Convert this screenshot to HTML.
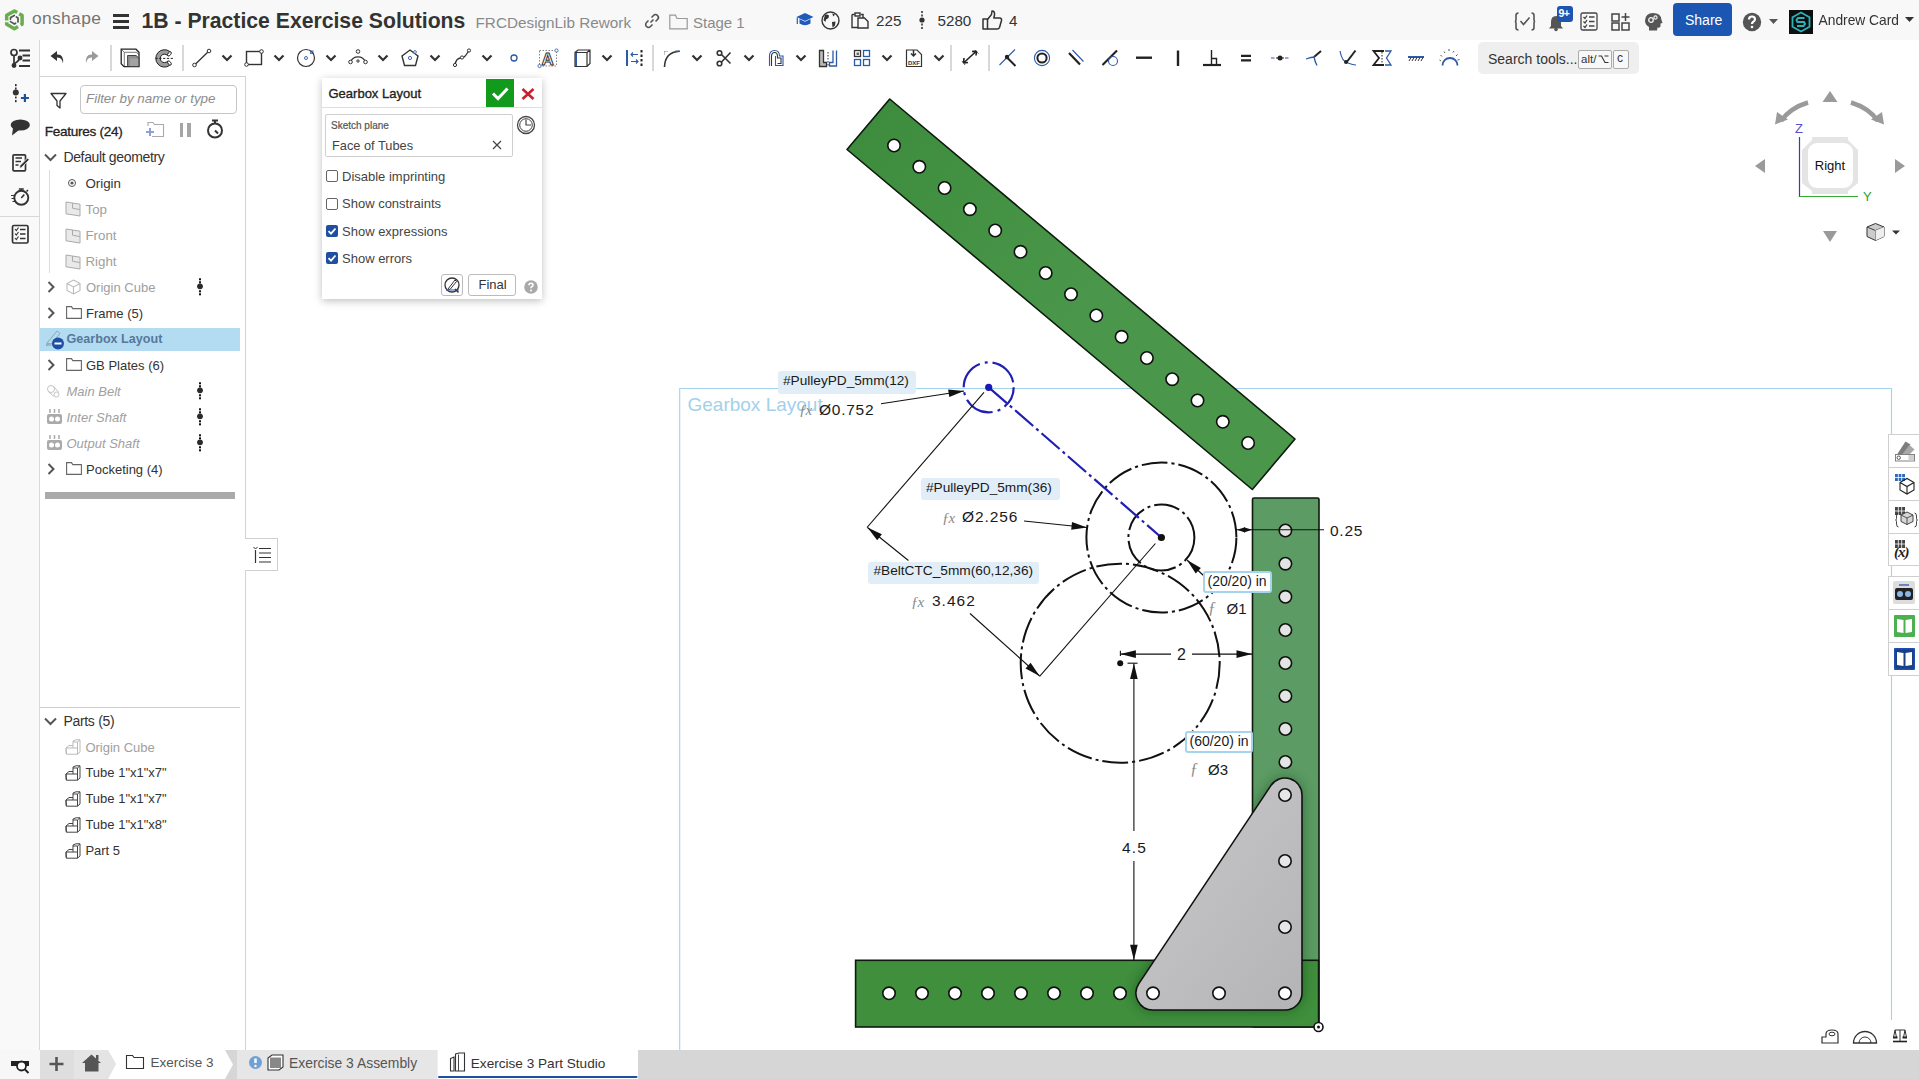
<!DOCTYPE html>
<html><head><meta charset="utf-8">
<style>
*{box-sizing:border-box;margin:0;padding:0}
html,body{width:1919px;height:1079px;overflow:hidden;background:#fff;font-family:"Liberation Sans",sans-serif;color:#333}
.a{position:absolute}
.t{position:absolute;white-space:nowrap;line-height:1}
svg{position:absolute;overflow:visible}
</style></head><body>

<div class="a" style="left:0;top:0;width:1919px;height:40px;background:#f8f8f8"></div>
<div class="a" style="left:0;top:40px;width:40px;height:1010px;background:#f9f9f9;border-right:1px solid #d8d8d8"></div>
<div class="a" style="left:40px;top:40px;width:1879px;height:37px;background:#fff"></div>
<div class="a" style="left:40px;top:76px;width:206px;height:974px;background:#fff;border-right:1px solid #d3d3d3;border-top:1px solid #d3d3d3"></div>
<div class="a" style="left:0;top:1050px;width:1919px;height:29px;background:#d6d6d6"></div>
<div class="a" style="left:0;top:1050px;width:40px;height:29px;background:#f7f7f7"></div>

<svg style="left:0;top:5px" width="30" height="30" viewBox="0 5 30 30">
<g fill="none" stroke="#66ae4e" stroke-width="3.5" stroke-linejoin="round">
<path d="M6.7 20.6 L6.7 15.35 L14.4 10.9 L17.2 12.5"/>
<path d="M19.2 13.9 L22.1 15.35 L22.1 24.25 L20.6 25.1"/>
<path d="M6.7 22.2 L6.7 24.25 L14.4 28.7 L18 26.6"/>
</g>
<g fill="none" stroke="#505550" stroke-width="1.7" stroke-linecap="round">
<path d="M10.5 19.3 L10.6 17.6 L14.3 15.4"/>
<path d="M16.4 17 L18 17.9 L18 22"/>
<path d="M10.5 21.6 L14.4 24 L15.6 23.2"/>
</g>
</svg>
<div class="t" style="left:32px;top:8px;font-size:17.4px;line-height:20px;color:#737373;letter-spacing:0.35px">onshape</div>
<div class="a" style="left:113px;top:14px;width:16px;height:3px;background:#333"></div><div class="a" style="left:113px;top:20px;width:16px;height:3px;background:#333"></div><div class="a" style="left:113px;top:26px;width:16px;height:3px;background:#333"></div>
<div class="t" style="left:141.5px;top:10.4px;font-size:21.2px;line-height:21.2px;color:#333;font-weight:bold">1B - Practice Exercise Solutions</div>
<div class="t" style="left:475.5px;top:15.3px;font-size:15.3px;line-height:15.3px;color:#8a8a8a;">FRCDesignLib Rework</div>
<svg style="left:644px;top:13px" width="16" height="16" viewBox="0 0 16 16" fill="none" stroke="#555" stroke-width="1.6">
<path d="M6.5 9.5 L9.5 6.5"/><path d="M7.5 4.5 L9.5 2.5 A2.5 2.5 0 0 1 13.5 6.5 L11.5 8.5"/><path d="M8.5 11.5 L6.5 13.5 A2.5 2.5 0 0 1 2.5 9.5 L4.5 7.5"/></svg>
<svg style="left:669px;top:14px" width="19" height="16" viewBox="0 0 19 16" fill="none" stroke="#999" stroke-width="1.2">
<path d="M0.8 2.5 L0.8 14.8 L18.2 14.8 L18.2 4.5 L8 4.5 L6.5 1.2 L0.8 1.2 Z"/></svg>
<div class="t" style="left:693px;top:14.5px;font-size:15px;line-height:15px;color:#8a8a8a;">Stage 1</div>
<svg style="left:796px;top:12px" width="18" height="16" viewBox="0 0 18 16">
<path d="M9 1 L17.5 5 L9 9 L0.5 5 Z" fill="#1f5cb8"/><path d="M3.5 7 L3.5 11.5 Q9 15 14.5 11.5 L14.5 7 L9 9.8 Z" fill="#1f5cb8"/><path d="M1.3 5.5 L1.3 12" stroke="#1f5cb8" stroke-width="1.2"/></svg>
<svg style="left:821px;top:11px" width="19" height="19" viewBox="0 0 19 19">
<circle cx="9.5" cy="9.5" r="8.5" fill="none" stroke="#333" stroke-width="1.4"/>
<path d="M4 4 Q6 3 8 4.5 L7.5 7 L5 8.5 L4.5 11 L2.5 9 Z" fill="#333"/><path d="M11 11 L14.5 10.5 L14 14.5 L11.5 16.5 Z" fill="#333"/><path d="M11 2.5 L14 3.5 L12.5 5.5 Z" fill="#333"/></svg>
<svg style="left:851px;top:12px" width="18" height="17" viewBox="0 0 18 17" fill="none" stroke="#333" stroke-width="1.4">
<path d="M1 2.5 L1 15.5 L7 15.5"/><path d="M3.5 2.5 L1 2.5"/><rect x="4" y="1" width="5" height="3" fill="#fff"/><path d="M7 6 L13.5 6 L17 9.5 L17 16 L7 16 Z"/><path d="M10 2.5 L12 2.5 L12 6"/></svg>
<div class="t" style="left:876px;top:12.9px;font-size:15.2px;line-height:15.2px;color:#333;">225</div>
<svg style="left:918px;top:11px" width="8" height="18" viewBox="0 0 8 18">
<rect x="3.2" y="0" width="1.6" height="2" fill="#333"/><rect x="3.2" y="3.5" width="1.6" height="2" fill="#333"/><circle cx="4" cy="9" r="2.6" fill="#333"/><rect x="3.2" y="12.5" width="1.6" height="2" fill="#333"/><rect x="3.2" y="16" width="1.6" height="2" fill="#333"/></svg>
<div class="t" style="left:937.5px;top:12.9px;font-size:15.2px;line-height:15.2px;color:#333;">5280</div>
<svg style="left:982px;top:10px" width="21" height="20" viewBox="0 0 21 20" fill="none" stroke="#333" stroke-width="1.5" stroke-linejoin="round">
<path d="M1 9 L5.5 9 L5.5 19 L1 19 Z"/><path d="M5.5 9.5 L9.5 4.5 L10 1 Q13 1 12.5 5 L11.8 8 L18 8 Q20 8.5 19.5 10.5 L17.5 17.5 Q17 19 15 19 L5.5 19"/></svg>
<div class="t" style="left:1009px;top:12.9px;font-size:15.2px;line-height:15.2px;color:#333;">4</div>
<svg style="left:1514px;top:12px" width="22" height="19" viewBox="0 0 22 19" fill="none" stroke="#555" stroke-width="1.6">
<path d="M4.5 1 Q2 1 2 3.5 L2 7.5 Q2 9.5 0.8 9.5 Q2 9.5 2 11.5 L2 15.5 Q2 18 4.5 18"/><path d="M17.5 1 Q20 1 20 3.5 L20 7.5 Q20 9.5 21.2 9.5 Q20 9.5 20 11.5 L20 15.5 Q20 18 17.5 18"/><path d="M6.5 9 L9.5 12.5 L15.5 5.5"/></svg>
<svg style="left:1548px;top:15px" width="16" height="16" viewBox="0 0 16 16">
<path d="M8 1 Q13 1 13 7 L13 11 L15 13.5 L1 13.5 L3 11 L3 7 Q3 1 8 1 Z" fill="#555"/><circle cx="8" cy="14.5" r="1.8" fill="#555"/></svg>
<div class="a" style="left:1557px;top:6px;width:16px;height:16px;background:#1d55b0;border-radius:3px"></div>
<div class="t" style="left:1558.5px;top:8.2px;font-size:10.5px;line-height:10.5px;color:#fff;font-weight:bold;letter-spacing:-0.5px">9+</div>
<svg style="left:1580px;top:12px" width="18" height="19" viewBox="0 0 18 19" fill="none" stroke="#444" stroke-width="1.3">
<rect x="1" y="1" width="16" height="17" rx="1.5"/><path d="M3.5 5 L5 6.5 L7 3.5 M3.5 9.5 L5 11 L7 8 M3.5 14 L5 15.5 L7 12.5"/><path d="M9 5 L14.5 5 M9 9.5 L14.5 9.5 M9 14 L14.5 14"/></svg>
<svg style="left:1611px;top:12px" width="20" height="19" viewBox="0 0 20 19" fill="none" stroke="#444" stroke-width="1.5">
<rect x="1" y="2" width="7" height="7"/><rect x="1" y="11" width="7" height="7"/><rect x="11" y="11" width="7" height="7"/><path d="M14.5 1 L14.5 9 M10.5 5 L18.5 5"/></svg>
<svg style="left:1644px;top:12px" width="19" height="19" viewBox="0 0 19 19">
<path d="M9 1 Q17 1 17.5 8 L18.5 11 L16.5 11.5 L16.5 14.5 Q16 16 13.5 15.5 L13 18.5 L5 18.5 L5 15 Q1 12.5 1 8.5 Q1.5 1 9 1 Z" fill="#555"/>
<circle cx="7" cy="8" r="2.3" fill="none" stroke="#f6f6f6" stroke-width="1.3"/><circle cx="11.5" cy="5.5" r="1.6" fill="none" stroke="#f6f6f6" stroke-width="1.1"/></svg>
<div class="a" style="left:1673px;top:3px;width:59px;height:33px;background:#1b56b3;border-radius:4px"></div>
<div class="t" style="left:1685px;top:12.5px;font-size:14px;line-height:14px;color:#fff;">Share</div>
<svg style="left:1742px;top:12px" width="20" height="20" viewBox="0 0 20 20">
<circle cx="10" cy="10" r="9.2" fill="#555"/><path d="M7 7.5 Q7 4.5 10 4.5 Q13 4.5 13 7.3 Q13 9 11 10 Q10 10.6 10 12" fill="none" stroke="#fff" stroke-width="2.2"/><circle cx="10" cy="15" r="1.3" fill="#fff"/></svg>
<svg style="left:1769px;top:19px" width="9" height="5" viewBox="0 0 9 5"><path d="M0 0 L9 0 L4.5 5 Z" fill="#555"/></svg>
<svg style="left:1789px;top:10px" width="24" height="24" viewBox="0 0 24 24">
<rect width="24" height="24" fill="#0b0f10"/><path d="M12 2.5 L20.5 7.3 L20.5 16.7 L12 21.5 L3.5 16.7 L3.5 7.3 Z" fill="none" stroke="#2bb3b8" stroke-width="1.8"/>
<path d="M15.5 8 L9 8 L7.5 10 L8.5 12 L15 12 L16 14 L14.5 16 L8 16" fill="none" stroke="#2bb3b8" stroke-width="2"/></svg>
<div class="t" style="left:1818.5px;top:14.1px;font-size:13.8px;line-height:13.8px;color:#333;transform:scaleY(1.1);transform-origin:0 50%">Andrew Card</div>
<svg style="left:1905px;top:17px" width="9" height="5" viewBox="0 0 9 5"><path d="M0 0 L9 0 L4.5 5 Z" fill="#333"/></svg>
<svg style="left:0;top:0" width="1919" height="80" viewBox="0 0 1919 80">
<g fill="none" stroke="#333" stroke-width="1.7"><circle cx="14" cy="52.5" r="3"/><path d="M14 55.5 L14 65"/><path d="M14 64 Q18 62 20 58"/><circle cx="14" cy="65.5" r="1.6" fill="#333"/><circle cx="20" cy="58" r="1.6" fill="#333"/><path d="M19 50.5 L30 50.5 M22.5 55.5 L30 55.5 M22.5 60.5 L30 60.5 M19 66 L30 66" stroke-width="2"/></g>
<path d="M57 51 L50.5 56 L57 61 L57 57.5 Q62 57 63 63.5 Q64 54 57 54.5 Z" fill="#333"/>
<path d="M92 51 L98.5 56 L92 61 L92 57.5 Q87 57 86 63.5 Q85 54 92 54.5 Z" fill="#9a9a9a"/>
<line x1="111" y1="45" x2="111" y2="71" stroke="#cfcfcf" stroke-width="1.6"/>
<path d="M121.2 49.2 L136 49.2 L139 52.2 L139 66.6 L124 66.6 L121.2 63.8 Z" fill="#fff" stroke="#222" stroke-width="1.3"/><path d="M124.3 66.2 L124.3 52.3 L136.8 52.3 L138.8 55" fill="none" stroke="#444" stroke-width="0.7"/><path d="M121.5 49.5 L124.3 52.3" stroke="#444" stroke-width="0.7"/><path d="M127.6 55.5 L136 55.5 L138.8 58 L138.8 66.5 L127.6 66.5 Z" fill="#8f8f8f" stroke="#333" stroke-width="0.9"/><rect x="130" y="58.5" width="8.3" height="7.6" fill="#a3a3a3"/>
<path d="M169.74 51.45 A8.7 8.7 0 1 0 169.74 65.35 L167.5 61.3 A4.2 4.2 0 1 1 167.5 55.5 Z" fill="#9c9c9c" stroke="#222" stroke-width="1"/><ellipse cx="169.4" cy="53.9" rx="1.4" ry="2.5" transform="rotate(38 169.4 53.9)" fill="#fff" stroke="#222" stroke-width="0.9"/><ellipse cx="169.4" cy="63" rx="1.4" ry="2.5" transform="rotate(-38 169.4 63)" fill="#fff" stroke="#222" stroke-width="0.9"/><path d="M155.5 58.4 L174 58.4" stroke="#222" stroke-width="1" stroke-dasharray="2.2 1.6"/>
<line x1="183" y1="45" x2="183" y2="71" stroke="#cfcfcf" stroke-width="1.6"/>
<path d="M194.5 65 L209 51" stroke="#333" stroke-width="1.3"/><circle cx="194.5" cy="65" r="1.8" fill="#fff" stroke="#333" stroke-width="1"/><circle cx="209" cy="51" r="1.8" fill="#fff" stroke="#333" stroke-width="1"/>
<path d="M222.5 55.5 L227 60 L231.5 55.5" fill="none" stroke="#333" stroke-width="2.2"/>
<rect x="246.5" y="51.5" width="15" height="13" fill="none" stroke="#333" stroke-width="1.4"/><circle cx="246.5" cy="64.5" r="1.8" fill="#fff" stroke="#333"/><circle cx="261.5" cy="51.5" r="1.8" fill="#fff" stroke="#333"/>
<path d="M274.5 55.5 L279 60 L283.5 55.5" fill="none" stroke="#333" stroke-width="2.2"/>
<circle cx="306" cy="58" r="8.5" fill="none" stroke="#333" stroke-width="1.2"/><circle cx="306" cy="58" r="1.5" fill="none" stroke="#2a5aa8" stroke-width="0.9"/><rect x="310.5" y="51" width="2.5" height="2.5" fill="none" stroke="#2a5aa8" stroke-width="0.8"/>
<path d="M326.5 55.5 L331 60 L335.5 55.5" fill="none" stroke="#333" stroke-width="2.2"/>
<path d="M350.5 62 A8 8 0 0 1 365.5 62" fill="none" stroke="#333" stroke-width="1.3"/><circle cx="350.5" cy="62" r="1.8" fill="#fff" stroke="#333"/><circle cx="365.5" cy="62" r="1.8" fill="#fff" stroke="#333"/><circle cx="358" cy="51.5" r="1.8" fill="#fff" stroke="#333"/><path d="M356 61 L360 61 M358 59 L358 63" stroke="#333" stroke-width="0.9"/>
<path d="M378.5 55.5 L383 60 L387.5 55.5" fill="none" stroke="#333" stroke-width="2.2"/>
<path d="M410 50 L418 56 L415.5 65.5 L404.5 65.5 L402 56 Z" fill="none" stroke="#333" stroke-width="1.4"/><circle cx="410" cy="58" r="1.6" fill="none" stroke="#2a5aa8" stroke-width="0.9"/><circle cx="415" cy="52" r="1.4" fill="#fff" stroke="#2a5aa8" stroke-width="0.8"/>
<path d="M430.5 55.5 L435 60 L439.5 55.5" fill="none" stroke="#333" stroke-width="2.2"/>
<path d="M455 65 Q456 58 461 58 Q464 58 466 55 L469 50.5" fill="none" stroke="#333" stroke-width="1.3"/><circle cx="455" cy="65" r="1.6" fill="#fff" stroke="#333"/><circle cx="462" cy="57.5" r="1.6" fill="#fff" stroke="#333"/><circle cx="469" cy="50.5" r="1.6" fill="#fff" stroke="#333"/>
<path d="M482.5 55.5 L487 60 L491.5 55.5" fill="none" stroke="#333" stroke-width="2.2"/>
<circle cx="514" cy="58" r="3" fill="none" stroke="#2a5aa8" stroke-width="1.3"/>
<rect x="539.5" y="50.5" width="17" height="15.5" fill="none" stroke="#666" stroke-width="0.8" stroke-dasharray="1.5 1.5"/><text x="541.5" y="64.5" font-family="Liberation Sans" font-weight="bold" font-size="17" fill="#fff" stroke="#333" stroke-width="1">A</text><circle cx="556.5" cy="50.5" r="1.6" fill="#fff" stroke="#2a5aa8" stroke-width="0.8"/><circle cx="539.5" cy="66" r="1.6" fill="#fff" stroke="#2a5aa8" stroke-width="0.8"/>
<path d="M575 52.5 L578 50 L590 50 L590 63.5 L587 66.5 L575 66.5 Z M575 52.5 L587 52.5 L587 66.5 M587 52.5 L590 50" fill="none" stroke="#333" stroke-width="1.2"/><path d="M576 53 L576 66" stroke="#2a5aa8" stroke-width="2"/>
<path d="M602.5 55.5 L607 60 L611.5 55.5" fill="none" stroke="#333" stroke-width="2.2"/>
<path d="M627 50 L627 66" stroke="#2a5aa8" stroke-width="2"/><path d="M641.5 50 L641.5 66" stroke="#222" stroke-width="2" stroke-dasharray="2.5 2"/><path d="M638 54.5 L631 54.5 M633 52.5 L631 54.5 L633 56.5 M631 61.5 L638 61.5 M636 59.5 L638 61.5 L636 63.5" fill="none" stroke="#2a5aa8" stroke-width="1.1"/>
<line x1="653" y1="45" x2="653" y2="71" stroke="#cfcfcf" stroke-width="1.6"/>
<path d="M664.5 67 Q665 52 679.5 51.3" fill="none" stroke="#333" stroke-width="1.6"/><path d="M675 51.3 L680 51.3" stroke="#2a5aa8" stroke-width="1.4"/><path d="M664.5 51.5 L668 51.5 M664.5 51.5 L664.5 55" stroke="#666" stroke-width="0.8" stroke-dasharray="1 1"/>
<path d="M692.5 55.5 L697 60 L701.5 55.5" fill="none" stroke="#333" stroke-width="2.2"/>
<g fill="none" stroke="#333" stroke-width="1.6"><circle cx="719.5" cy="53" r="2.3"/><circle cx="719.5" cy="63.5" r="2.3"/><path d="M721.5 54.5 L730.5 63.5 M721.5 62 L730.5 52.5"/></g>
<path d="M744.5 55.5 L749 60 L753.5 55.5" fill="none" stroke="#333" stroke-width="2.2"/>
<path d="M769.5 66 L769.5 56 Q769.5 50.5 774.5 50.5 Q779.5 50.5 779.5 56 L783 56 L783 65.5 L775.5 65.5 L775.5 56" fill="none" stroke="#2a5aa8" stroke-width="1.1"/><path d="M771.5 66 L771.5 56.5 Q771.5 52.5 774.5 52.5 Q777.5 52.5 777.5 56.5 L777.5 58 L781 58 L781 63.5 L777.5 63.5" fill="none" stroke="#333" stroke-width="1.1"/>
<path d="M796.5 55.5 L801 60 L805.5 55.5" fill="none" stroke="#333" stroke-width="2.2"/>
<path d="M819.5 50.5 L823.5 50.5 L823.5 62.5 L826.5 62.5 L826.5 66.5 L819.5 66.5 Z" fill="#bbb" stroke="#333" stroke-width="1.3"/><path d="M828 52 L828 66" stroke="#333" stroke-width="1" stroke-dasharray="1.5 1.5"/><path d="M836.5 50.5 L836.5 66 L829.5 66 L829.5 62.5 L833 62.5 L833 50.5" fill="none" stroke="#2a5aa8" stroke-width="1.3"/>
<rect x="854.5" y="50.5" width="6" height="6" fill="none" stroke="#333" stroke-width="1.3"/><rect x="856.5" y="52.5" width="2.5" height="2.5" fill="#666"/><rect x="863.5" y="50.5" width="6" height="6" fill="none" stroke="#2a5aa8" stroke-width="1.3"/><rect x="854.5" y="59.5" width="6" height="6" fill="none" stroke="#2a5aa8" stroke-width="1.3"/><rect x="863.5" y="59.5" width="6" height="6" fill="none" stroke="#2a5aa8" stroke-width="1.3"/>
<path d="M882.5 55.5 L887 60 L891.5 55.5" fill="none" stroke="#333" stroke-width="2.2"/>
<path d="M906.5 50 L917 50 L921.5 54.5 L921.5 66.5 L906.5 66.5 Z" fill="#fff" stroke="#333" stroke-width="1.2"/><path d="M913.5 50 L913.5 55.5 M911 53.5 L913.5 56 L916 53.5" fill="none" stroke="#333" stroke-width="1.5"/><text x="908" y="64.5" font-family="Liberation Sans" font-weight="bold" font-size="6" fill="#333">DXF</text>
<path d="M934.5 55.5 L939 60 L943.5 55.5" fill="none" stroke="#333" stroke-width="2.2"/>
<line x1="951" y1="45" x2="951" y2="71" stroke="#cfcfcf" stroke-width="1.6"/>
<path d="M963.5 63 L976.5 51 M963.5 63 L964 58 M963.5 63 L968 62.5 M976.5 51 L972 51.5 M976.5 51 L976 55.5" fill="none" stroke="#222" stroke-width="1.6"/><path d="M975 50.5 L978.5 53.5 M962 61 L965 65" stroke="#333" stroke-width="0.8"/>
<line x1="989" y1="45" x2="989" y2="71" stroke="#cfcfcf" stroke-width="1.6"/>
<path d="M999.5 65 L1015 49.5" stroke="#2a5aa8" stroke-width="1.1"/><path d="M1007 57.5 L1015.5 66" stroke="#222" stroke-width="2"/><circle cx="1007" cy="57" r="2.2" fill="#222"/>
<circle cx="1042" cy="58" r="7.6" fill="none" stroke="#2a5aa8" stroke-width="1.1"/><circle cx="1042" cy="58" r="4.6" fill="none" stroke="#222" stroke-width="2"/>
<path d="M1069 53 L1080 64.5" stroke="#222" stroke-width="2.2"/><path d="M1072.5 50 L1083.5 61.5" stroke="#2a5aa8" stroke-width="1.1"/>
<path d="M1102.5 65 L1117 50.5" stroke="#222" stroke-width="2.2"/><circle cx="1113" cy="61" r="4.5" fill="none" stroke="#2a5aa8" stroke-width="1.1"/>
<path d="M1136 57.7 L1152 57.7" stroke="#222" stroke-width="2.4"/>
<path d="M1178 50.5 L1178 66" stroke="#222" stroke-width="2.4"/>
<path d="M1203 65 L1221 65 M1211.5 50 L1211.5 65 M1211.5 58.5 L1216.5 58.5 L1216.5 65" fill="none" stroke="#222" stroke-width="1.4"/><path d="M1203 65 L1221 65" stroke="#222" stroke-width="2.2"/>
<path d="M1241 55.8 L1251 55.8 M1241 60.3 L1251 60.3" stroke="#222" stroke-width="2.2"/>
<path d="M1271 58 L1274.5 58 M1285 58 L1288.5 58" stroke="#2a5aa8" stroke-width="1.2"/><path d="M1276 58 L1284 58" stroke="#222" stroke-width="1"/><circle cx="1280" cy="58" r="2.5" fill="#222"/>
<path d="M1314 57 L1321 51" stroke="#222" stroke-width="2"/><path d="M1306 59 Q1312 57 1314 57 Q1315 62 1317 65.5" fill="none" stroke="#2a5aa8" stroke-width="1.3"/>
<path d="M1340 51 Q1342 62 1348 63 Q1353 65 1356 65" fill="none" stroke="#2a5aa8" stroke-width="1.2"/><path d="M1346 63 L1355.5 50.5" stroke="#222" stroke-width="2"/><circle cx="1346" cy="62" r="2" fill="#222"/>
<path d="M1384 51 L1373.5 51 L1379 58 L1373.5 65 L1384 65" fill="none" stroke="#222" stroke-width="1.8"/><path d="M1382 52 L1382 64" stroke="#222" stroke-width="1" stroke-dasharray="1.5 1.5"/><path d="M1385 51 L1391 51 L1386.5 58 L1391 65 L1385 65" fill="none" stroke="#2a5aa8" stroke-width="1.3"/>
<path d="M1408 57 L1424 57" stroke="#2a5aa8" stroke-width="2"/><path d="M1409 61 L1411 57.5 M1412 61 L1414 57.5 M1415 61 L1417 57.5 M1418 61 L1420 57.5 M1421 61 L1423 57.5" stroke="#333" stroke-width="1"/>
<path d="M1442.5 65.5 A7.5 7.5 0 0 1 1457.5 65.5" fill="none" stroke="#2a5aa8" stroke-width="1.8"/><g stroke="#444" stroke-width="0.9"><path d="M1441 61 L1439.5 60 M1442 56.5 L1440.5 55 M1445 53 L1444 51.5 M1449 51 L1449 49 M1453 52.5 L1454 51 M1456 56 L1457.5 54.5 M1457.5 60 L1459.5 59.5"/></g>
</svg>
<div class="a" style="left:1478px;top:42px;width:161px;height:32px;background:#efefef;border-radius:5px"></div>
<div class="t" style="left:1488px;top:50.5px;font-size:14px;line-height:16px;color:#333">Search tools...</div>
<div class="a" style="left:1578px;top:49.5px;width:34px;height:19px;background:#f8f8f8;border:1px solid #aaa;border-radius:2px"></div>
<div class="t" style="left:1581px;top:52.5px;font-size:11.5px;line-height:13px;color:#333">alt/</div>
<svg style="left:1597.5px;top:54px" width="11" height="10" viewBox="0 0 11 10"><path d="M0.5 2 L3.5 2 L7 8.5 L10.5 8.5 M6.5 2 L10.5 2" fill="none" stroke="#333" stroke-width="1.1"/></svg>
<div class="a" style="left:1612.5px;top:49.5px;width:16px;height:19px;background:#f8f8f8;border:1px solid #aaa;border-radius:2px"></div>
<div class="t" style="left:1617px;top:52px;font-size:12px;line-height:13px;color:#333">c</div>
<svg style="left:0;top:80px" width="40" height="170" viewBox="0 80 40 170">
<g fill="#333"><rect x="15" y="84" width="1.6" height="2.2"/><rect x="15" y="87.5" width="1.6" height="2"/><circle cx="15.8" cy="92.6" r="3"/><rect x="15" y="96.5" width="1.6" height="2"/><rect x="15" y="100" width="1.6" height="2.2"/></g>
<path d="M24.9 94 L24.9 102 M20.9 98 L28.9 98" stroke="#1d4f9e" stroke-width="2.2"/>
<ellipse cx="20.3" cy="125" rx="9.6" ry="5.6" fill="#333"/><path d="M13 128 L12 135.5 L19 130 Z" fill="#333"/>
<rect x="13" y="154.8" width="12.5" height="16" rx="1" fill="none" stroke="#333" stroke-width="1.7"/><path d="M15.5 158 L22 158 M15.5 161.5 L21 161.5 M15.5 165 L18.5 165" stroke="#333" stroke-width="1.4"/><path d="M19.5 168.5 L20 165.5 L27.5 158 L29.3 159.8 L21.8 167.3 Z" fill="#333" stroke="#f9f9f9" stroke-width="0.8"/>
<circle cx="21.3" cy="197.8" r="7" fill="none" stroke="#333" stroke-width="1.9"/><path d="M18.8 189 L23.8 189 M21.3 189 L21.3 191 M21.3 198 L24.3 194.5 M26.5 191.5 L28 190" stroke="#333" stroke-width="1.6"/><path d="M11 195.5 L15 195.5 M11.5 198.5 L14.5 198.5 M12.5 201.5 L15 201.5" stroke="#333" stroke-width="1.2"/>
<rect x="12.5" y="225.5" width="15.5" height="17.5" rx="1.5" fill="none" stroke="#333" stroke-width="1.7"/><path d="M15 229 L16.3 230.5 L18.5 227.5 M15 233.5 L16.3 235 L18.5 232 M15 238 L16.3 239.5 L18.5 236.5" fill="none" stroke="#333" stroke-width="1.1"/><path d="M20 229.5 L25.5 229.5 M20 234 L25.5 234 M20 238.5 L25.5 238.5" stroke="#333" stroke-width="1.4"/>
</svg>
<div class="a" style="left:0;top:215.5px;width:40px;height:1px;background:#d8d8d8"></div>
<svg style="left:50px;top:92px" width="17" height="17" viewBox="0 0 17 17"><path d="M1 1.5 L16 1.5 L10 9 L10 16 L7 13.5 L7 9 Z" fill="none" stroke="#333" stroke-width="1.3" stroke-linejoin="round"/></svg>
<div class="a" style="left:79.5px;top:84.5px;width:157px;height:29px;border:1px solid #c6c6c6;border-radius:4px;background:#fff"></div>
<div class="t" style="left:86px;top:92.3px;font-size:13.4px;line-height:14.7px;color:#8c8c8c;font-style:italic">Filter by name or type</div>
<div class="t" style="left:44.7px;top:123.6px;font-size:13.6px;line-height:15.0px;color:#222;-webkit-text-stroke:0.3px #222;letter-spacing:-0.3px">Features (24)</div>
<svg style="left:145px;top:121px" width="20" height="17" viewBox="0 0 20 17"><path d="M3 5 L3 1.5 L8 1.5 L9.5 3.5 L18.5 3.5 L18.5 15.5 L7 15.5" fill="none" stroke="#aaa" stroke-width="1.1"/><path d="M1 11 L9 11 M5 7 L5 15" stroke="#8fa0d8" stroke-width="2"/></svg>
<div class="a" style="left:179.5px;top:123px;width:3.5px;height:14px;background:#a5a5a5"></div><div class="a" style="left:187px;top:123px;width:3.5px;height:14px;background:#a5a5a5"></div>
<svg style="left:206px;top:119px" width="18" height="20" viewBox="0 0 18 20"><circle cx="9" cy="11.5" r="7" fill="none" stroke="#333" stroke-width="2"/><path d="M6 1.5 L12 1.5 M9 1.5 L9 4 M9 11.5 L12 14.5" stroke="#333" stroke-width="2"/></svg>
<svg style="left:44px;top:152.5px" width="13" height="9" viewBox="0 0 13 9"><path d="M1 1.5 L6.5 7 L12 1.5" fill="none" stroke="#555" stroke-width="2"/></svg>
<div class="t" style="left:63.4px;top:149.8px;font-size:14px;line-height:15.4px;color:#333;letter-spacing:-0.35px">Default geometry</div>
<div class="a" style="left:49px;top:170px;width:1px;height:103px;background:#ddd"></div>
<svg style="left:67px;top:178px" width="10" height="10" viewBox="0 0 10 10"><circle cx="5" cy="5" r="3.5" fill="none" stroke="#555" stroke-width="1"/><circle cx="5" cy="5" r="1.6" fill="#555"/></svg>
<div class="t" style="left:85.5px;top:176.5px;font-size:13.3px;line-height:14.6px;color:#333;">Origin</div>
<svg style="left:65px;top:201.3px" width="16" height="16" viewBox="0 0 16 16"><path d="M1 1 L15 3.2 L15 15 L1 12.8 Z" fill="#e9e9e9" stroke="#aaa" stroke-width="1"/><path d="M7.5 2 L7.5 7.2 L15 8.6" fill="none" stroke="#aaa" stroke-width="1"/></svg>
<div class="t" style="left:85.5px;top:202.5px;font-size:13.3px;line-height:14.6px;color:#a0a0a0;">Top</div>
<svg style="left:65px;top:227.5px" width="16" height="16" viewBox="0 0 16 16"><path d="M1 1 L15 3.2 L15 15 L1 12.8 Z" fill="#e9e9e9" stroke="#aaa" stroke-width="1"/><path d="M7.5 2 L7.5 7.2 L15 8.6" fill="none" stroke="#aaa" stroke-width="1"/></svg>
<div class="t" style="left:85.5px;top:228.7px;font-size:13.3px;line-height:14.6px;color:#a0a0a0;">Front</div>
<svg style="left:65px;top:253.60000000000002px" width="16" height="16" viewBox="0 0 16 16"><path d="M1 1 L15 3.2 L15 15 L1 12.8 Z" fill="#e9e9e9" stroke="#aaa" stroke-width="1"/><path d="M7.5 2 L7.5 7.2 L15 8.6" fill="none" stroke="#aaa" stroke-width="1"/></svg>
<div class="t" style="left:85.5px;top:254.8px;font-size:13.3px;line-height:14.6px;color:#a0a0a0;">Right</div>
<svg style="left:46.5px;top:281.3px" width="9" height="12" viewBox="0 0 9 12"><path d="M1.5 1 L6.5 6 L1.5 11" fill="none" stroke="#555" stroke-width="2"/></svg>
<svg style="left:66px;top:279px" width="15" height="16" viewBox="0 0 15 16" fill="none" stroke="#bbb" stroke-width="1.1"><path d="M7.5 1 L14 4.5 L14 11.5 L7.5 15 L1 11.5 L1 4.5 Z M1 4.5 L7.5 8 L14 4.5 M7.5 8 L7.5 15"/></svg>
<div class="t" style="left:86px;top:280.7px;font-size:13px;line-height:14.3px;color:#a0a0a0;">Origin Cube</div>
<svg style="left:197px;top:277.5px" width="6" height="18" viewBox="0 0 6 18"><rect x="2" y="0.3" width="2" height="2" fill="#111"/><rect x="2" y="3.3" width="2" height="2" fill="#111"/><circle cx="3" cy="8.3" r="2.9" fill="#2a2a2a"/><rect x="2" y="12.3" width="2" height="2" fill="#111"/><rect x="2" y="15.3" width="2" height="2" fill="#111"/></svg>
<svg style="left:46.5px;top:307.4px" width="9" height="12" viewBox="0 0 9 12"><path d="M1.5 1 L6.5 6 L1.5 11" fill="none" stroke="#555" stroke-width="2"/></svg>
<svg style="left:66px;top:306.4px" width="16" height="13" viewBox="0 0 16 13"><path d="M0.6 0.6 L5.5 0.6 L6.8 2.6 L15.4 2.6 L15.4 12.4 L0.6 12.4 Z" fill="none" stroke="#666" stroke-width="1.1"/></svg>
<div class="t" style="left:86px;top:306.8px;font-size:13px;line-height:14.3px;color:#333;">Frame (5)</div>
<div class="a" style="left:40px;top:327.5px;width:200px;height:23px;background:#b3dcf3"></div>
<svg style="left:45px;top:328px" width="22" height="22" viewBox="0 0 22 22"><path d="M2 15 L12 3 L15 5.5 L6 16 Z M2 15 L1.5 17.5 L4 16.5" fill="none" stroke="#8aa" stroke-width="1"/><path d="M1 17 L9 17" stroke="#8aa" stroke-width="1"/><circle cx="13" cy="15.5" r="6" fill="#1f4fa5"/><path d="M9.5 15.5 L16.5 15.5" stroke="#fff" stroke-width="2"/></svg>
<div class="t" style="left:66.5px;top:332.9px;font-size:12.6px;line-height:13.9px;color:#56789a;font-weight:bold">Gearbox Layout</div>
<svg style="left:46.5px;top:359.3px" width="9" height="12" viewBox="0 0 9 12"><path d="M1.5 1 L6.5 6 L1.5 11" fill="none" stroke="#555" stroke-width="2"/></svg>
<svg style="left:66px;top:358.3px" width="16" height="13" viewBox="0 0 16 13"><path d="M0.6 0.6 L5.5 0.6 L6.8 2.6 L15.4 2.6 L15.4 12.4 L0.6 12.4 Z" fill="none" stroke="#666" stroke-width="1.1"/></svg>
<div class="t" style="left:86px;top:358.7px;font-size:13px;line-height:14.3px;color:#333;">GB Plates (6)</div>
<svg style="left:46px;top:384px" width="15" height="15" viewBox="0 0 15 15" fill="none" stroke="#c4c4c4" stroke-width="1"><circle cx="5" cy="5" r="3.5"/><circle cx="10.5" cy="10.5" r="2.5"/><path d="M2.3 7.5 L8.3 12.7 M7.5 2.3 L12.7 8.3"/></svg>
<div class="t" style="left:66.5px;top:384.7px;font-size:13px;line-height:14.3px;color:#a0a0a0;font-style:italic">Main Belt</div>
<svg style="left:197px;top:381.5px" width="6" height="18" viewBox="0 0 6 18"><rect x="2" y="0.3" width="2" height="2" fill="#111"/><rect x="2" y="3.3" width="2" height="2" fill="#111"/><circle cx="3" cy="8.3" r="2.9" fill="#2a2a2a"/><rect x="2" y="12.3" width="2" height="2" fill="#111"/><rect x="2" y="15.3" width="2" height="2" fill="#111"/></svg>
<svg style="left:46px;top:408.3px" width="17" height="17" viewBox="0 0 17 17"><rect x="1" y="6" width="15" height="10" rx="2" fill="#aaa"/><circle cx="5.5" cy="11" r="2.5" fill="#fff"/><circle cx="11.5" cy="11" r="2.5" fill="#fff"/><path d="M4 1 L4 5 M8.5 1 L8.5 5 M13 1 L13 5" stroke="#aaa" stroke-width="1.5"/></svg>
<div class="t" style="left:66.5px;top:410.7px;font-size:13px;line-height:14.3px;color:#a0a0a0;font-style:italic">Inter Shaft</div>
<svg style="left:197px;top:407.8px" width="6" height="18" viewBox="0 0 6 18"><rect x="2" y="0.3" width="2" height="2" fill="#111"/><rect x="2" y="3.3" width="2" height="2" fill="#111"/><circle cx="3" cy="8.3" r="2.9" fill="#2a2a2a"/><rect x="2" y="12.3" width="2" height="2" fill="#111"/><rect x="2" y="15.3" width="2" height="2" fill="#111"/></svg>
<svg style="left:46px;top:434.4px" width="17" height="17" viewBox="0 0 17 17"><rect x="1" y="6" width="15" height="10" rx="2" fill="#aaa"/><circle cx="5.5" cy="11" r="2.5" fill="#fff"/><circle cx="11.5" cy="11" r="2.5" fill="#fff"/><path d="M4 1 L4 5 M8.5 1 L8.5 5 M13 1 L13 5" stroke="#aaa" stroke-width="1.5"/></svg>
<div class="t" style="left:66.5px;top:436.8px;font-size:13px;line-height:14.3px;color:#a0a0a0;font-style:italic">Output Shaft</div>
<svg style="left:197px;top:433.9px" width="6" height="18" viewBox="0 0 6 18"><rect x="2" y="0.3" width="2" height="2" fill="#111"/><rect x="2" y="3.3" width="2" height="2" fill="#111"/><circle cx="3" cy="8.3" r="2.9" fill="#2a2a2a"/><rect x="2" y="12.3" width="2" height="2" fill="#111"/><rect x="2" y="15.3" width="2" height="2" fill="#111"/></svg>
<svg style="left:46.5px;top:463.4px" width="9" height="12" viewBox="0 0 9 12"><path d="M1.5 1 L6.5 6 L1.5 11" fill="none" stroke="#555" stroke-width="2"/></svg>
<svg style="left:66px;top:462.4px" width="16" height="13" viewBox="0 0 16 13"><path d="M0.6 0.6 L5.5 0.6 L6.8 2.6 L15.4 2.6 L15.4 12.4 L0.6 12.4 Z" fill="none" stroke="#666" stroke-width="1.1"/></svg>
<div class="t" style="left:86px;top:462.8px;font-size:13px;line-height:14.3px;color:#333;">Pocketing (4)</div>
<div class="a" style="left:45px;top:492px;width:190px;height:7px;background:#aaaaaa"></div>
<div class="a" style="left:245px;top:538px;width:33px;height:33px;background:#fff;border:1px solid #cfcfcf;border-left:none"></div>
<svg style="left:252px;top:546px" width="20" height="18" viewBox="0 0 20 18"><path d="M1.5 1 L3.5 3 L5.5 1" fill="none" stroke="#333" stroke-width="1"/><path d="M3.5 4 L3.5 17" stroke="#333" stroke-width="1.2"/><path d="M7 2.5 L19 2.5 M7 7 L19 7 M7 11.5 L19 11.5 M7 16 L19 16" stroke="#333" stroke-width="1.2"/></svg>
<div class="a" style="left:40px;top:707px;width:200px;height:1px;background:#cfcfcf"></div>
<svg style="left:44px;top:716.5px" width="13" height="9" viewBox="0 0 13 9"><path d="M1 1.5 L6.5 7 L12 1.5" fill="none" stroke="#555" stroke-width="2"/></svg>
<div class="t" style="left:63.4px;top:714.3px;font-size:14px;line-height:15.4px;color:#333;letter-spacing:-0.3px">Parts (5)</div>
<svg style="left:64.5px;top:739.2px" width="17" height="16" viewBox="0 0 17 16" fill="none" stroke="#bbb" stroke-width="1"><path d="M1 9 L4 6.5 L8 6.5 L8 2 L11 0.8 L15 0.8 L15 13 L12.5 15.2 L1.5 15.2 L1 14 Z"/><path d="M1 9 L1.5 15.2 M4 9 L1 9 M4 9 L12.5 9 L12.5 15.2 M12.5 9 L12.5 3 L15 0.8 M8 3 L12.5 3 M8 6.5 L8 9"/></svg>
<div class="t" style="left:85.4px;top:740.6px;font-size:13px;line-height:14.3px;color:#a0a0a0;">Origin Cube</div>
<svg style="left:64.5px;top:764.7px" width="17" height="16" viewBox="0 0 17 16" fill="none" stroke="#444" stroke-width="1"><path d="M1 9 L4 6.5 L8 6.5 L8 2 L11 0.8 L15 0.8 L15 13 L12.5 15.2 L1.5 15.2 L1 14 Z"/><path d="M1 9 L1.5 15.2 M4 9 L1 9 M4 9 L12.5 9 L12.5 15.2 M12.5 9 L12.5 3 L15 0.8 M8 3 L12.5 3 M8 6.5 L8 9"/></svg>
<div class="t" style="left:85.4px;top:766.1px;font-size:13px;line-height:14.3px;color:#333;">Tube 1"x1"x7"</div>
<svg style="left:64.5px;top:790.8px" width="17" height="16" viewBox="0 0 17 16" fill="none" stroke="#444" stroke-width="1"><path d="M1 9 L4 6.5 L8 6.5 L8 2 L11 0.8 L15 0.8 L15 13 L12.5 15.2 L1.5 15.2 L1 14 Z"/><path d="M1 9 L1.5 15.2 M4 9 L1 9 M4 9 L12.5 9 L12.5 15.2 M12.5 9 L12.5 3 L15 0.8 M8 3 L12.5 3 M8 6.5 L8 9"/></svg>
<div class="t" style="left:85.4px;top:792.1px;font-size:13px;line-height:14.3px;color:#333;">Tube 1"x1"x7"</div>
<svg style="left:64.5px;top:816.7px" width="17" height="16" viewBox="0 0 17 16" fill="none" stroke="#444" stroke-width="1"><path d="M1 9 L4 6.5 L8 6.5 L8 2 L11 0.8 L15 0.8 L15 13 L12.5 15.2 L1.5 15.2 L1 14 Z"/><path d="M1 9 L1.5 15.2 M4 9 L1 9 M4 9 L12.5 9 L12.5 15.2 M12.5 9 L12.5 3 L15 0.8 M8 3 L12.5 3 M8 6.5 L8 9"/></svg>
<div class="t" style="left:85.4px;top:818.1px;font-size:13px;line-height:14.3px;color:#333;">Tube 1"x1"x8"</div>
<svg style="left:64.5px;top:843px" width="17" height="16" viewBox="0 0 17 16" fill="none" stroke="#444" stroke-width="1"><path d="M1 9 L4 6.5 L8 6.5 L8 2 L11 0.8 L15 0.8 L15 13 L12.5 15.2 L1.5 15.2 L1 14 Z"/><path d="M1 9 L1.5 15.2 M4 9 L1 9 M4 9 L12.5 9 L12.5 15.2 M12.5 9 L12.5 3 L15 0.8 M8 3 L12.5 3 M8 6.5 L8 9"/></svg>
<div class="t" style="left:85.4px;top:844.4px;font-size:13px;line-height:14.3px;color:#333;">Part 5</div>
<svg width="1919" height="1079" style="left:0;top:0" viewBox="0 0 1919 1079">
<defs><linearGradient id="gg" x1="0" y1="0" x2="1" y2="1"><stop offset="0" stop-color="#c9c9cb"/><stop offset="1" stop-color="#b4b4b6"/></linearGradient><linearGradient id="dg" gradientUnits="userSpaceOnUse" x1="868" y1="124" x2="1274" y2="464"><stop offset="0" stop-color="#3e8c3d"/><stop offset="0.55" stop-color="#4a974b"/><stop offset="1" stop-color="#4a974c"/></linearGradient><filter id="blur" x="-20%" y="-20%" width="140%" height="140%"><feGaussianBlur stdDeviation="7"/></filter><clipPath id="tubes"><rect x="1252.5" y="498" width="66.5" height="529"/><rect x="855.6" y="960.3" width="463" height="66.7"/></clipPath></defs>
<path d="M679.7 1050 L679.7 388.5 L1891.5 388.5 L1891.5 1020" fill="none" stroke="#a3d3ec" stroke-width="1.1"/>
<text x="687.5" y="411" font-family="Liberation Sans" font-size="19" fill="#a3d0ea">Gearbox Layout</text>
<polygon points="889.7,99 1295,439 1252.3,489.5 847,149.5" fill="url(#dg)" stroke="#0d1a0d" stroke-width="1.6" stroke-linejoin="round"/>
<circle cx="894.0" cy="145.5" r="6.2" fill="#fff" stroke="#111" stroke-width="1.6"/>
<circle cx="919.3" cy="166.8" r="6.2" fill="#fff" stroke="#111" stroke-width="1.6"/>
<circle cx="944.6" cy="188.0" r="6.2" fill="#fff" stroke="#111" stroke-width="1.6"/>
<circle cx="969.9" cy="209.2" r="6.2" fill="#fff" stroke="#111" stroke-width="1.6"/>
<circle cx="995.2" cy="230.5" r="6.2" fill="#fff" stroke="#111" stroke-width="1.6"/>
<circle cx="1020.5" cy="251.8" r="6.2" fill="#fff" stroke="#111" stroke-width="1.6"/>
<circle cx="1045.7" cy="273.0" r="6.2" fill="#fff" stroke="#111" stroke-width="1.6"/>
<circle cx="1071.0" cy="294.2" r="6.2" fill="#fff" stroke="#111" stroke-width="1.6"/>
<circle cx="1096.3" cy="315.5" r="6.2" fill="#fff" stroke="#111" stroke-width="1.6"/>
<circle cx="1121.6" cy="336.8" r="6.2" fill="#fff" stroke="#111" stroke-width="1.6"/>
<circle cx="1146.9" cy="358.0" r="6.2" fill="#fff" stroke="#111" stroke-width="1.6"/>
<circle cx="1172.2" cy="379.2" r="6.2" fill="#fff" stroke="#111" stroke-width="1.6"/>
<circle cx="1197.5" cy="400.5" r="6.2" fill="#fff" stroke="#111" stroke-width="1.6"/>
<circle cx="1222.8" cy="421.8" r="6.2" fill="#fff" stroke="#111" stroke-width="1.6"/>
<circle cx="1248.1" cy="443.0" r="6.2" fill="#fff" stroke="#111" stroke-width="1.6"/>
<rect x="1252.5" y="498" width="66.5" height="529" rx="1.5" fill="#5c9c64" stroke="#0d1a0d" stroke-width="1.6"/>
<circle cx="1285.4" cy="530.5" r="6.2" fill="#e3e5e3" stroke="#111" stroke-width="1.6"/>
<circle cx="1285.4" cy="563.7" r="6.2" fill="#e3e5e3" stroke="#111" stroke-width="1.6"/>
<circle cx="1285.4" cy="596.8" r="6.2" fill="#e3e5e3" stroke="#111" stroke-width="1.6"/>
<circle cx="1285.4" cy="630" r="6.2" fill="#e3e5e3" stroke="#111" stroke-width="1.6"/>
<circle cx="1285.4" cy="663" r="6.2" fill="#e3e5e3" stroke="#111" stroke-width="1.6"/>
<circle cx="1285.4" cy="696" r="6.2" fill="#e3e5e3" stroke="#111" stroke-width="1.6"/>
<circle cx="1285.4" cy="729" r="6.2" fill="#e3e5e3" stroke="#111" stroke-width="1.6"/>
<circle cx="1285.4" cy="762" r="6.2" fill="#e3e5e3" stroke="#111" stroke-width="1.6"/>
<rect x="855.6" y="960.3" width="463" height="66.7" fill="#3f8f3d" stroke="#0d1a0d" stroke-width="1.6"/>
<circle cx="889" cy="993.3" r="6.2" fill="#fff" stroke="#111" stroke-width="1.6"/>
<circle cx="922" cy="993.3" r="6.2" fill="#fff" stroke="#111" stroke-width="1.6"/>
<circle cx="955" cy="993.3" r="6.2" fill="#fff" stroke="#111" stroke-width="1.6"/>
<circle cx="988" cy="993.3" r="6.2" fill="#fff" stroke="#111" stroke-width="1.6"/>
<circle cx="1021" cy="993.3" r="6.2" fill="#fff" stroke="#111" stroke-width="1.6"/>
<circle cx="1054" cy="993.3" r="6.2" fill="#fff" stroke="#111" stroke-width="1.6"/>
<circle cx="1087" cy="993.3" r="6.2" fill="#fff" stroke="#111" stroke-width="1.6"/>
<circle cx="1120" cy="993.3" r="6.2" fill="#fff" stroke="#111" stroke-width="1.6"/>
<g clip-path="url(#tubes)"><path d="M1302 795 L1302 993 A17 17 0 0 1 1285 1010 L1153 1010 A17 17 0 0 1 1138.85 983.57 L1270.85 785.57 A17 17 0 0 1 1302 795 Z" fill="#0a2a0a" opacity="0.45" filter="url(#blur)"/></g>
<path d="M1302 795 L1302 993 A17 17 0 0 1 1285 1010 L1153 1010 A17 17 0 0 1 1138.85 983.57 L1270.85 785.57 A17 17 0 0 1 1302 795 Z" fill="url(#gg)" stroke="#111" stroke-width="1.6"/>
<circle cx="1285" cy="795" r="6.2" fill="#e6e6e8" stroke="#111" stroke-width="1.6"/>
<circle cx="1285" cy="861" r="6.2" fill="#e6e6e8" stroke="#111" stroke-width="1.6"/>
<circle cx="1285" cy="927" r="6.2" fill="#e6e6e8" stroke="#111" stroke-width="1.6"/>
<circle cx="1285" cy="993.3" r="6.2" fill="#fff" stroke="#111" stroke-width="1.6"/>
<circle cx="1219" cy="993.3" r="6.2" fill="#fff" stroke="#111" stroke-width="1.6"/>
<circle cx="1153" cy="993.3" r="6.2" fill="#fff" stroke="#111" stroke-width="1.6"/>
<circle cx="1318.5" cy="1027" r="4.5" fill="#fff" stroke="#111" stroke-width="1.6"/><circle cx="1318.5" cy="1027" r="1.5" fill="#111"/>
<circle cx="1161.4" cy="537.5" r="75" fill="none" stroke="#111" stroke-width="2" stroke-dasharray="26 4 3 4"/>
<circle cx="1161.4" cy="537.5" r="33" fill="none" stroke="#111" stroke-width="2" stroke-dasharray="26 4 3 4"/>
<circle cx="1120.2" cy="663.2" r="99.5" fill="none" stroke="#111" stroke-width="2" stroke-dasharray="26 4 3 4"/>
<circle cx="988.7" cy="387.3" r="25" fill="none" stroke="#2020b0" stroke-width="2.2" stroke-dasharray="30 5 3 5" stroke-dashoffset="8"/>
<line x1="988.7" y1="387.3" x2="1161.4" y2="537.5" stroke="#2020b0" stroke-width="2.2" stroke-dasharray="24 4 3 4"/>
<circle cx="1161.4" cy="537.5" r="3.6" fill="#111"/>
<circle cx="1120.2" cy="663.2" r="3" fill="#111"/>
<circle cx="988.7" cy="387.3" r="3.6" fill="#1a1ab8"/>
<line x1="984.0" y1="392.4" x2="867.0" y2="527.5" stroke="#111" stroke-width="1.1" />
<line x1="1155.4" y1="543.5" x2="1039.6" y2="676.3" stroke="#111" stroke-width="1.1" />
<line x1="908.4" y1="560.5" x2="867.5" y2="527.5" stroke="#111" stroke-width="1.1" />
<path d="M867.5 527.5 L881.9 534.3 L877.2 540.2 Z" fill="#111"/>
<line x1="970.0" y1="613.5" x2="1039.6" y2="676.0" stroke="#111" stroke-width="1.1" />
<path d="M1039.6 676.0 L1025.5 668.5 L1030.6 662.8 Z" fill="#111"/>
<line x1="881.0" y1="403.7" x2="964.0" y2="391.0" stroke="#111" stroke-width="1.1" />
<path d="M964.0 391.0 L949.3 397.1 L948.1 389.6 Z" fill="#111"/>
<line x1="1024.0" y1="521.0" x2="1087.0" y2="527.5" stroke="#111" stroke-width="1.1" />
<path d="M1087.0 527.5 L1071.2 529.7 L1072.0 522.1 Z" fill="#111"/>
<line x1="1204.0" y1="576.0" x2="1187.0" y2="560.0" stroke="#111" stroke-width="1.1" />
<path d="M1187.0 560.0 L1200.9 567.9 L1195.7 573.4 Z" fill="#111"/>
<line x1="1236.0" y1="529.8" x2="1324.0" y2="529.8" stroke="#111" stroke-width="1.1" />
<path d="M1252.0 529.8 L1244.0 532.4 L1244.0 527.2 Z" fill="#111"/>
<path d="M1237.0 529.8 L1245.0 527.2 L1245.0 532.4 Z" fill="#111"/>
<line x1="1120.4" y1="650.8" x2="1120.4" y2="656.0" stroke="#111" stroke-width="1.1" />
<line x1="1120.4" y1="654.1" x2="1171.0" y2="654.1" stroke="#111" stroke-width="1.1" />
<path d="M1120.4 654.1 L1135.9 650.3 L1135.9 657.9 Z" fill="#111"/>
<line x1="1192.0" y1="654.1" x2="1252.0" y2="654.1" stroke="#111" stroke-width="1.1" />
<path d="M1252.0 654.1 L1236.5 657.9 L1236.5 650.3 Z" fill="#111"/>
<line x1="1127.5" y1="663.2" x2="1137.6" y2="663.2" stroke="#111" stroke-width="1.1" />
<line x1="1133.9" y1="663.5" x2="1133.9" y2="831.0" stroke="#111" stroke-width="1.1" />
<path d="M1133.9 663.5 L1137.7 679.0 L1130.1 679.0 Z" fill="#111"/>
<line x1="1133.9" y1="861.0" x2="1133.9" y2="960.3" stroke="#111" stroke-width="1.1" />
<path d="M1133.9 960.3 L1130.1 944.8 L1137.7 944.8 Z" fill="#111"/>
</svg>
<div class="a" style="left:778.4px;top:371.4px;width:137.20000000000005px;height:22.200000000000045px;background:#e1eef7;border-radius:3px;"></div>
<div class="t" style="left:783px;top:373.8px;font-size:13.65px;line-height:13.65px;color:#1a1a1a;">#PulleyPD_5mm(12)</div>
<div class="t" style="left:799px;top:401px;font:italic 15px/18px 'Liberation Serif';color:#8a8a8a;letter-spacing:-1px">ƒx</div>
<div class="t" style="left:819px;top:402.1px;font-size:15.5px;line-height:15.5px;color:#1a1a1a;letter-spacing:0.75px">Ø0.752</div>
<div class="a" style="left:921px;top:478.4px;width:138.5999999999999px;height:21.600000000000023px;background:#e1eef7;border-radius:3px;"></div>
<div class="t" style="left:926px;top:480.7px;font-size:13.65px;line-height:13.65px;color:#1a1a1a;">#PulleyPD_5mm(36)</div>
<div class="t" style="left:942px;top:509px;font:italic 15px/18px 'Liberation Serif';color:#8a8a8a;letter-spacing:-1px">ƒx</div>
<div class="t" style="left:962px;top:508.9px;font-size:15.5px;line-height:15.5px;color:#1a1a1a;letter-spacing:0.9px">Ø2.256</div>
<div class="a" style="left:868px;top:562px;width:171px;height:22px;background:#e1eef7;border-radius:3px;"></div>
<div class="t" style="left:873.4px;top:564.4px;font-size:13.7px;line-height:13.7px;color:#1a1a1a;">#BeltCTC_5mm(60,12,36)</div>
<div class="t" style="left:911px;top:593px;font:italic 15px/18px 'Liberation Serif';color:#8a8a8a;letter-spacing:-1px">ƒx</div>
<div class="t" style="left:932px;top:592.9px;font-size:15.5px;line-height:15.5px;color:#1a1a1a;letter-spacing:1px">3.462</div>
<div class="a" style="left:1202.8px;top:570.6px;width:69.0px;height:22.299999999999955px;background:#fff;border-radius:3px;border:2px solid #a6d4ee;"></div>
<div class="t" style="left:1207.5px;top:573.5px;font-size:14px;line-height:14px;color:#1a1a1a;">(20/20) in</div>
<div class="t" style="left:1208px;top:599px;font:italic 16px/18px 'Liberation Serif';color:#8a8a8a">ƒ</div>
<div class="t" style="left:1226.5px;top:600.5px;font-size:15px;line-height:15px;color:#1a1a1a;">Ø1</div>
<div class="a" style="left:1184.8px;top:731px;width:68.40000000000009px;height:22px;background:#fff;border-radius:3px;border:2px solid #a6d4ee;"></div>
<div class="t" style="left:1189.5px;top:734.0px;font-size:14px;line-height:14px;color:#1a1a1a;">(60/20) in</div>
<div class="t" style="left:1190px;top:760px;font:italic 16px/18px 'Liberation Serif';color:#8a8a8a">ƒ</div>
<div class="t" style="left:1208px;top:761.5px;font-size:15px;line-height:15px;color:#1a1a1a;">Ø3</div>
<div class="t" style="left:1330px;top:523.2px;font-size:15.5px;line-height:15.5px;color:#1a1a1a;letter-spacing:0.75px">0.25</div>
<div class="t" style="left:1177px;top:647.0px;font-size:16px;line-height:16px;color:#1a1a1a;">2</div>
<div class="t" style="left:1122px;top:839.6px;font-size:15.5px;line-height:15.5px;color:#1a1a1a;letter-spacing:1.1px">4.5</div>
<div class="a" style="left:322px;top:78px;width:220px;height:221px;background:#fff;box-shadow:0 2px 8px rgba(0,0,0,0.25);"></div>
<div class="t" style="left:328.5px;top:86.8px;font-size:13px;line-height:14.3px;color:#222;-webkit-text-stroke:0.35px #222">Gearbox Layout</div>
<div class="a" style="left:486px;top:79px;width:28px;height:28px;background:#129a1d"></div>
<svg style="left:486px;top:79px" width="28" height="28" viewBox="0 0 28 28"><path d="M7 14.5 L12 19.5 L21.5 9.5" fill="none" stroke="#fff" stroke-width="3"/></svg>
<svg style="left:521px;top:88px" width="14" height="12" viewBox="0 0 14 12"><path d="M1.5 1 L12.5 11 M12.5 1 L1.5 11" stroke="#c8202f" stroke-width="2.6"/></svg>
<div class="a" style="left:322px;top:107px;width:220px;height:1px;background:#dedede"></div>
<div class="a" style="left:325px;top:113.5px;width:188px;height:43px;border:1px solid #cfcfcf;border-radius:2px"></div>
<div class="t" style="left:331px;top:119.5px;font-size:10px;line-height:11.0px;color:#555;-webkit-text-stroke:0.2px #555">Sketch plane</div>
<div class="t" style="left:332px;top:138.8px;font-size:12.8px;line-height:14.1px;color:#444;">Face of Tubes</div>
<svg style="left:492px;top:140px" width="10" height="10" viewBox="0 0 10 10"><path d="M1 1 L9 9 M9 1 L1 9" stroke="#444" stroke-width="1.2"/></svg>
<svg style="left:516px;top:115px" width="20" height="20" viewBox="0 0 20 20"><circle cx="10" cy="10" r="8.5" fill="none" stroke="#444" stroke-width="1.3"/><circle cx="10" cy="10" r="6.3" fill="none" stroke="#444" stroke-width="1"/><path d="M10 4.5 L10 10 L15 10" fill="none" stroke="#444" stroke-width="1.2"/></svg>
<div class="a" style="left:326px;top:170px;width:12px;height:12px;border:1px solid #666;border-radius:2px;background:#fff"></div>
<div class="t" style="left:342px;top:169.7px;font-size:13px;line-height:14.3px;color:#444;">Disable imprinting</div>
<div class="a" style="left:326px;top:197.5px;width:12px;height:12px;border:1px solid #666;border-radius:2px;background:#fff"></div>
<div class="t" style="left:342px;top:197.2px;font-size:13px;line-height:14.3px;color:#444;">Show constraints</div>
<svg style="left:326px;top:225px" width="12" height="12" viewBox="0 0 12 12"><rect x="0" y="0" width="12" height="12" rx="2" fill="#1f4fa0"/><path d="M2.5 6.2 L5 8.6 L9.5 3.5" fill="none" stroke="#fff" stroke-width="1.8"/></svg>
<div class="t" style="left:342px;top:224.7px;font-size:13px;line-height:14.3px;color:#444;">Show expressions</div>
<svg style="left:326px;top:252px" width="12" height="12" viewBox="0 0 12 12"><rect x="0" y="0" width="12" height="12" rx="2" fill="#1f4fa0"/><path d="M2.5 6.2 L5 8.6 L9.5 3.5" fill="none" stroke="#fff" stroke-width="1.8"/></svg>
<div class="t" style="left:342px;top:251.7px;font-size:13px;line-height:14.3px;color:#444;">Show errors</div>
<div class="a" style="left:441px;top:274px;width:21.5px;height:21.5px;border:1px solid #bbb;border-radius:3px;background:#fff"></div>
<svg style="left:443px;top:276px" width="18" height="18" viewBox="0 0 18 18"><circle cx="9" cy="9" r="7" fill="none" stroke="#333" stroke-width="1.3"/><path d="M5 13 L12 4 L13.5 5.5 L7 13.5 Z" fill="none" stroke="#333" stroke-width="1"/><path d="M3 14 L16 14" stroke="#2a5aa8" stroke-width="1"/><path d="M12 13 L15.5 16.5" stroke="#333" stroke-width="1.4"/></svg>
<div class="a" style="left:467.5px;top:274px;width:48px;height:21.5px;border:1px solid #bbb;border-radius:3px;background:#fff"></div>
<div class="t" style="left:478.5px;top:277.9px;font-size:13px;line-height:14.3px;color:#333;">Final</div>
<svg style="left:524px;top:280px" width="14" height="14" viewBox="0 0 14 14"><circle cx="7" cy="7" r="6.8" fill="#a9a9a9"/><path d="M5 5.3 Q5 3.3 7 3.3 Q9 3.3 9 5 Q9 6.2 7.6 6.8 Q7 7.2 7 8.3" fill="none" stroke="#fff" stroke-width="1.6"/><circle cx="7" cy="10.6" r="1" fill="#fff"/></svg>
<svg style="left:1740px;top:80px" width="179" height="175" viewBox="1740 80 179 175">
<path d="M1822.5 102 L1837.5 102 L1830 91 Z" fill="#9a9a9a"/>
<path d="M1808 102.5 Q1790 108 1781 121" fill="none" stroke="#9a9a9a" stroke-width="4.5"/><path d="M1775 124.5 L1777 112 L1788 119.5 Z" fill="#9a9a9a"/>
<path d="M1851 102.5 Q1869 108 1878 121" fill="none" stroke="#9a9a9a" stroke-width="4.5"/><path d="M1884 124.5 L1882 112 L1871 119.5 Z" fill="#9a9a9a"/>
<path d="M1755 166 L1765 159 L1765 173 Z" fill="#9a9a9a"/>
<path d="M1905 166 L1895 159 L1895 173 Z" fill="#9a9a9a"/>
<path d="M1823 241 L1837 241 L1830 230 Z" fill="#9a9a9a" transform="rotate(180 1830 236)"/>
<path d="M1812 137 L1848 137 L1848 140 L1858 150 L1858 183 L1848 191 L1848 194 L1812 194 L1812 191 L1802 183 L1802 150 L1812 140 Z" fill="#e4e4e5"/>
<rect x="1808" y="143" width="45" height="45" rx="9" fill="#fff"/>
<path d="M1799.5 137 L1799.5 196.5 L1858 196.5" fill="none" stroke="#3c3caa" stroke-width="1.2"/>
<path d="M1799.5 196.5 L1858 196.5" fill="none" stroke="#33aa33" stroke-width="1.2"/>
<text x="1795" y="133" font-family="Liberation Sans" font-size="13" fill="#5a4fc8">Z</text>
<text x="1863" y="201" font-family="Liberation Sans" font-size="13" fill="#2aa02a">Y</text>
<text x="1830" y="170" font-family="Liberation Sans" font-size="13" fill="#111" text-anchor="middle">Right</text>
<path d="M1867 227 L1875.5 223.5 L1884 227 L1884 236.5 L1875.5 240.5 L1867 236.5 Z" fill="#ccc" stroke="#333" stroke-width="1"/><path d="M1867 227 L1875.5 230.5 L1884 227 M1875.5 230.5 L1875.5 240.5" fill="none" stroke="#333" stroke-width="0.9"/><path d="M1875.5 230.5 L1884 227 L1884 236.5 L1875.5 240.5 Z" fill="#eee"/>
<path d="M1892 230.5 L1900 230.5 L1896 234.5 Z" fill="#333"/>
</svg>
<div class="a" style="left:1888px;top:433.5px;width:31px;height:132px;background:#fff;border:1px solid #cfcfcf;border-right:none"></div>
<div class="a" style="left:1888px;top:576px;width:31px;height:100px;background:#fff;border:1px solid #cfcfcf;border-right:none"></div>
<div class="a" style="left:1888px;top:466.7px;width:31px;height:1px;background:#cfcfcf"></div>
<div class="a" style="left:1888px;top:499.6px;width:31px;height:1px;background:#cfcfcf"></div>
<div class="a" style="left:1888px;top:532.8px;width:31px;height:1px;background:#cfcfcf"></div>
<div class="a" style="left:1888px;top:609.3px;width:31px;height:1px;background:#cfcfcf"></div>
<div class="a" style="left:1888px;top:642.2px;width:31px;height:1px;background:#cfcfcf"></div>
<svg style="left:1888px;top:430px" width="31" height="250" viewBox="1888 430 31 250">
<path d="M1897 454.5 L1905.5 441.5 L1910.5 444.5 L1903.5 454.5 Z" fill="#7d7d7d"/><path d="M1902 454.5 L1909.5 445 L1914.5 449.5 L1909.5 454.5 Z" fill="#a8a8a8"/><rect x="1895.5" y="454.5" width="19" height="6.5" fill="#fff" stroke="#777" stroke-width="0.9"/><rect x="1908.5" y="455" width="5.5" height="5.5" fill="#cfcfcf"/><circle cx="1898.7" cy="457.7" r="1.7" fill="#fff" stroke="#444" stroke-width="0.9"/><rect x="1895" y="474" width="10" height="7" fill="#2a6bc0"/><line x1="1898.33" y1="474" x2="1898.33" y2="481" stroke="#fff" stroke-width="0.8"/><line x1="1901.67" y1="474" x2="1901.67" y2="481" stroke="#fff" stroke-width="0.8"/><line x1="1895" y1="477.50" x2="1905" y2="477.50" stroke="#fff" stroke-width="0.8"/><path d="M1900 482.5 L1907 478.5 L1914 482.5 L1914 490 L1907 494 L1900 490 Z M1900 482.5 L1907 486.5 L1914 482.5 M1907 486.5 L1907 494" fill="none" stroke="#222" stroke-width="1.1"/><rect x="1895" y="507" width="10" height="8" fill="#444"/><line x1="1898.33" y1="507" x2="1898.33" y2="515" stroke="#fff" stroke-width="0.8"/><line x1="1901.67" y1="507" x2="1901.67" y2="515" stroke="#fff" stroke-width="0.8"/><line x1="1895" y1="511.00" x2="1905" y2="511.00" stroke="#fff" stroke-width="0.8"/><path d="M1901 515 L1907 512 L1913 515 L1913 521.5 L1907 524.5 L1901 521.5 Z" fill="#d6d6d6" stroke="#333" stroke-width="0.9"/><path d="M1901 515 L1907 518 L1913 515 M1907 518 L1907 524.5" fill="none" stroke="#333" stroke-width="0.8"/><path d="M1898.5 513 Q1896.5 513 1896.5 516 L1896.5 518.5 Q1896.5 520 1895.5 520 Q1896.5 520 1896.5 521.5 L1896.5 524 Q1896.5 527 1898.5 527 M1914.5 513 Q1916.5 513 1916.5 516 L1916.5 518.5 Q1916.5 520 1917.5 520 Q1916.5 520 1916.5 521.5 L1916.5 524 Q1916.5 527 1914.5 527" fill="none" stroke="#333" stroke-width="0.9"/><rect x="1895" y="540" width="10" height="8" fill="#444"/><line x1="1898.33" y1="540" x2="1898.33" y2="548" stroke="#fff" stroke-width="0.8"/><line x1="1901.67" y1="540" x2="1901.67" y2="548" stroke="#fff" stroke-width="0.8"/><line x1="1895" y1="544.00" x2="1905" y2="544.00" stroke="#fff" stroke-width="0.8"/><text x="1894" y="557" font-family="Liberation Serif" font-style="italic" font-weight="bold" font-size="15" fill="#222" letter-spacing="-1">(x)</text><rect x="1893" y="581" width="22" height="23" rx="2" fill="#ddd"/><rect x="1895" y="588" width="18" height="12" rx="2" fill="#222"/><circle cx="1900" cy="594" r="3" fill="#8ab8e8"/><circle cx="1908" cy="594" r="3" fill="#8ab8e8"/><path d="M1899 585 L1909 585" stroke="#3a6bc0" stroke-width="1.5"/>
<rect x="1894" y="615" width="21" height="22" rx="1" fill="#4caf50"/><path d="M1897 619 L1903.5 620 L1903.5 633 L1897 632 Z M1912 619 L1905.5 620 L1905.5 633 L1912 632 Z" fill="#fff"/>
<rect x="1894" y="648" width="21" height="22" rx="1" fill="#1d4fae"/><rect x="1895.5" y="649.5" width="18" height="19" fill="#111" opacity="0.25"/><path d="M1897 652 L1903.5 653 L1903.5 666 L1897 665 Z M1912 652 L1905.5 653 L1905.5 666 L1912 665 Z" fill="#fff"/>
</svg>
<svg style="left:1815px;top:1022px" width="100" height="24" viewBox="1815 1022 100 24">
<path d="M1822 1043 L1838 1043 L1838 1034 Q1838 1030 1832 1030 Q1826 1030 1826 1034 L1826 1037 L1822 1037 Z" fill="none" stroke="#333" stroke-width="1.2"/><ellipse cx="1832" cy="1034" rx="3" ry="1.8" fill="none" stroke="#333" stroke-width="1"/>
<path d="M1853.5 1043 A11.5 11.5 0 0 1 1876.5 1043 Z" fill="none" stroke="#333" stroke-width="1.3"/><path d="M1859 1043 A6 6 0 0 1 1871 1043" fill="none" stroke="#333" stroke-width="1"/>
<path d="M1893 1041.5 L1907 1041.5" stroke="#222" stroke-width="1.6"/><path d="M1900 1030 L1900 1041 M1895 1030 L1905 1030 M1895 1030 L1893.5 1037.5 M1895 1030 L1896.5 1037.5 M1905 1030 L1903.5 1037.5 M1905 1030 L1906.5 1037.5" fill="none" stroke="#333" stroke-width="1"/><path d="M1893 1037.5 L1897.5 1037.5 M1902.5 1037.5 L1907 1037.5" stroke="#222" stroke-width="1.8"/>
</svg>
<svg style="left:0;top:1050px" width="700" height="29" viewBox="0 1050 700 29"><rect x="0" y="1050" width="40" height="29" fill="#f7f7f7"/><rect x="40" y="1050" width="34" height="29" fill="#dedede"/><path d="M74 1050 L108 1050 L116 1064.5 L108 1079 L74 1079 Z" fill="#e4e4e4"/><path d="M108 1050 L225 1050 L233 1064.5 L225 1079 L108 1079 L116 1064 Z" fill="#fff"/><rect x="237" y="1050" width="200.5" height="29" fill="#e6e6e6"/><rect x="437.5" y="1050" width="200.5" height="29" fill="#fff"/><rect x="438" y="1076" width="199.5" height="2" rx="1" fill="#1d4fa0"/><path d="M11 1055 L29 1055 L29 1060" fill="none" stroke="#222" stroke-width="0"/><rect x="11" y="1061" width="18" height="5" fill="#222"/><circle cx="21.5" cy="1066" r="4.5" fill="#fff" stroke="#222" stroke-width="1.8"/><path d="M24.5 1069 L28.5 1073" stroke="#222" stroke-width="2"/><path d="M49.5 1064 L63.5 1064 M56.5 1057 L56.5 1071" stroke="#555" stroke-width="2.6"/><path d="M82 1063 L91.5 1054.5 L101 1063 L98.5 1063 L98.5 1071.5 L85 1071.5 L85 1063 Z" fill="#555"/><rect x="96" y="1055" width="2.5" height="5" fill="#555"/><path d="M126.5 1055.5 L132.5 1055.5 L134 1057.5 L143.5 1057.5 L143.5 1068.5 L126.5 1068.5 Z" fill="none" stroke="#333" stroke-width="1.1"/><circle cx="255.5" cy="1062.5" r="6.5" fill="#6fa0d8"/><path d="M255.5 1058.5 L255.5 1063" stroke="#fff" stroke-width="2.5"/><circle cx="255.5" cy="1066" r="1.2" fill="#fff"/><path d="M268 1058 L272 1055 L283 1055 L283 1067 L279 1070 L268 1070 Z" fill="#fff" stroke="#333" stroke-width="1.1"/><path d="M270 1057.5 L281 1057.5 L281 1068 L270 1068 Z" fill="#888"/><path d="M450.5 1058.5 L454 1057 L454 1071 L450.5 1071 Z M455.5 1054 L459 1053 L464.5 1053 L464.5 1071 L455.5 1071 Z" fill="#fff" stroke="#333" stroke-width="1.1"/><path d="M458.5 1054.5 L458.5 1071" stroke="#333" stroke-width="0.9"/></svg>
<div class="t" style="left:150.5px;top:1056.1px;font-size:13.5px;line-height:14.9px;color:#555;">Exercise 3</div>
<div class="t" style="left:289px;top:1056.4px;font-size:13.9px;line-height:15.3px;color:#555;">Exercise 3 Assembly</div>
<div class="t" style="left:470.8px;top:1055.7px;font-size:13.6px;line-height:15.0px;color:#333;">Exercise 3 Part Studio</div>
</body></html>
